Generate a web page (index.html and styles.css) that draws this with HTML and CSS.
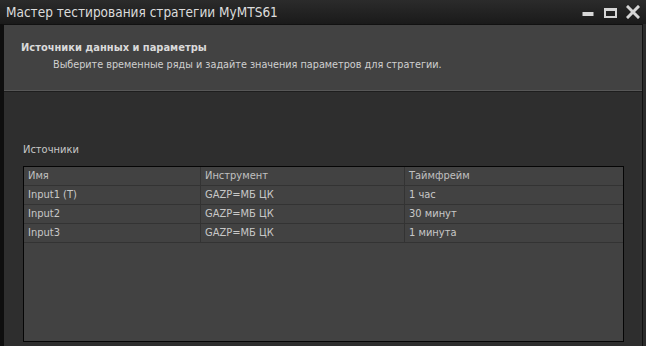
FILE: index.html
```html
<!DOCTYPE html>
<html lang="ru">
<head>
<meta charset="utf-8">
<link rel="stylesheet" href="styles.css">
</head>
<body>
<div class="window">
  <div class="titlebar">
    <div class="title">Мастер тестирования стратегии MyMTS61</div>
    <div class="controls">
      <svg class="ctl" width="13" height="13" viewBox="0 0 13 13"><rect x="0.5" y="6" width="11" height="4" fill="#d6d6d6"/></svg>
      <svg class="ctl" width="13" height="13" viewBox="0 0 13 13"><rect x="1" y="3" width="11" height="8" fill="none" stroke="#d6d6d6" stroke-width="2"/><rect x="1" y="2" width="11" height="3" fill="#d6d6d6"/></svg>
      <svg class="ctl" width="14" height="14" viewBox="0 0 14 14"><path d="M2 2 L12 12 M12 2 L2 12" stroke="#d6d6d6" stroke-width="3" stroke-linecap="square"/></svg>
    </div>
  </div>
  <div class="frame">
    <div class="body">
      <div class="header">
        <div class="h-title">Источники данных и параметры</div>
        <div class="h-sub">Выберите временные ряды и задайте значения параметров для стратегии.</div>
      </div>
      <div class="content">
        <div class="label">Источники</div>
        <div class="grid">
          <div class="row head">
            <div class="cell c1">Имя</div>
            <div class="cell c2">Инструмент</div>
            <div class="cell c3">Таймфрейм</div>
          </div>
          <div class="row">
            <div class="cell c1">Input1 (T)</div>
            <div class="cell c2">GAZP=МБ ЦК</div>
            <div class="cell c3">1 час</div>
          </div>
          <div class="row">
            <div class="cell c1">Input2</div>
            <div class="cell c2">GAZP=МБ ЦК</div>
            <div class="cell c3">30 минут</div>
          </div>
          <div class="row">
            <div class="cell c1">Input3</div>
            <div class="cell c2">GAZP=МБ ЦК</div>
            <div class="cell c3">1 минута</div>
          </div>
        </div>
      </div>
    </div>
  </div>
</div>
</body>
</html>
```
FILE: styles.css
```css
html, body {
  margin: 0;
  padding: 0;
  background: #2c2c2c;
}
.window {
  width: 646px;
  height: 346px;
  display: flex;
  flex-direction: column;
  font-family: "DejaVu Sans Condensed", "DejaVu Sans", sans-serif;
  font-stretch: condensed;
  overflow: hidden;
}
.titlebar {
  height: 24px;
  flex: none;
  display: flex;
  align-items: center;
  justify-content: space-between;
  background: linear-gradient(#2b2b2b, #1a1a1a);
  padding: 0 6px 0 6px;
}
.title {
  color: #dcdcdc;
  font-size: 13.5px;
}
.controls {
  display: flex;
  align-items: center;
  gap: 9px;
}
.ctl {
  display: block;
}
.frame {
  flex: 1;
  display: flex;
  padding-right: 3px;
  background: #2b2b2b;
}
.body {
  flex: 1;
  display: flex;
  flex-direction: column;
  border-left: 4px solid #0e0e0e;
  border-right: 1px solid #111;
  border-top: 1px solid #111;
  background: #2e2e2e;
}
.header {
  height: 66px;
  flex: none;
  background: #424242;
  border-bottom: 1px solid #575757;
  box-shadow: 0 1px 0 #1e1e1e;
  padding: 16px 0 0 17px;
  box-sizing: border-box;
}
.h-title {
  color: #dadada;
  font-size: 11px;
  font-weight: bold;
  line-height: 14px;
}
.h-sub {
  color: #d0d0d0;
  font-size: 10.75px;
  line-height: 14px;
  margin: 3px 0 0 32px;
}
.content {
  flex: 1;
  padding: 52px 18px 4px 19px;
  display: flex;
  flex-direction: column;
}
.label {
  color: #c8c8c8;
  font-size: 11px;
  line-height: 14px;
  margin-bottom: 9px;
}
.grid {
  flex: 1;
  background: #424242;
  border: 1px solid #050505;
}
.row {
  display: flex;
  height: 19px;
  border-bottom: 1px solid #333;
  box-sizing: border-box;
}
.cell {
  color: #c8c8c8;
  font-size: 11px;
  line-height: 18px;
  padding-left: 4px;
  box-sizing: border-box;
  white-space: nowrap;
}
.head .cell {
  color: #c0c0c0;
}
.c1 { width: 177px; border-right: 1px solid #333; }
.c2 { width: 204px; border-right: 1px solid #333; }
.c3 { flex: 1; }
```
